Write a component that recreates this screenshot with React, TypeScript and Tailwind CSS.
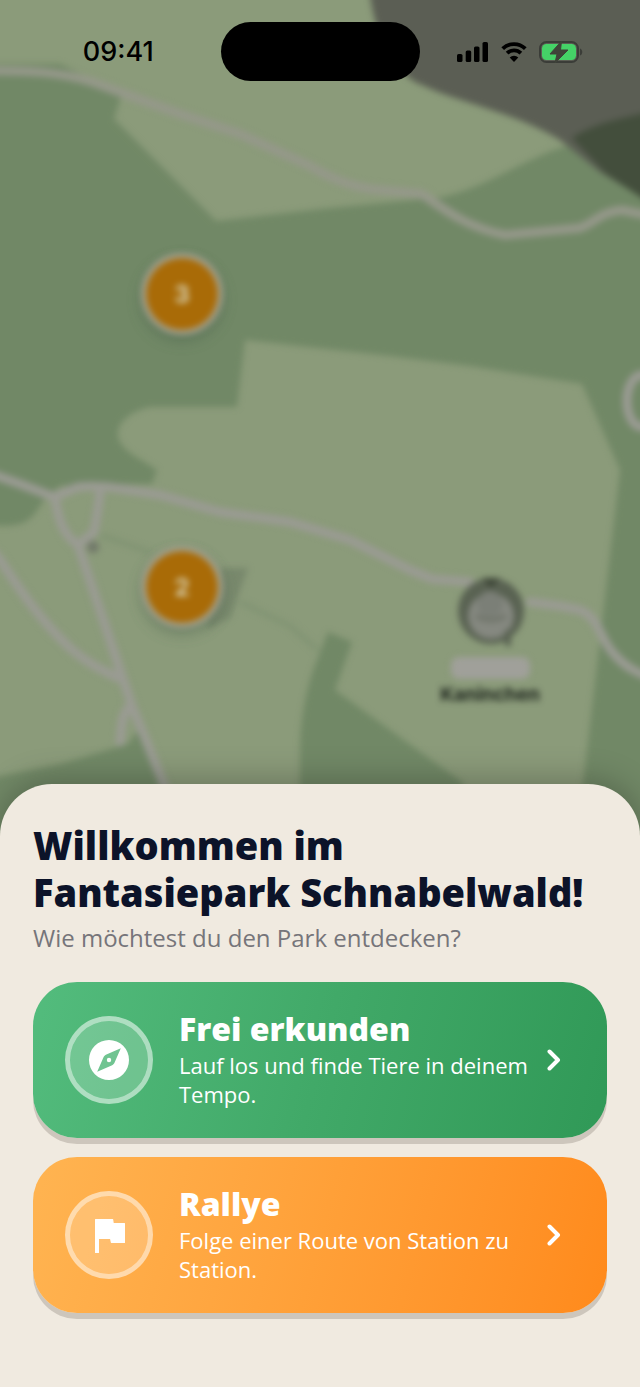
import React from 'react';

type Tour = {
  id: string;
  title: string;
  description: string;
  gradient: string;
  icon: React.ReactNode;
};

const CompassIcon = () => (
  <svg viewBox="0 0 24 24" className="size-12" fill="currentColor" aria-hidden="true">
    <path
      fillRule="evenodd"
      d="M12 2a10 10 0 1 0 0 20 10 10 0 0 0 0-20zM17.9 6.1l-3.1 7.2c-.3.7-.8 1.2-1.5 1.5L6.1 17.9l3.1-7.2c.3-.7.8-1.2 1.5-1.5z"
    />
    <circle cx="12" cy="12" r="1.1" />
  </svg>
);

const FlagIcon = () => (
  <svg
    viewBox="0 0 24 24"
    className="size-12"
    fill="currentColor"
    stroke="currentColor"
    strokeWidth="0.6"
    strokeLinejoin="round"
    aria-hidden="true"
  >
    <path d="M14.1 6.3 13.8 4.3H5.3v16.4h1.4v-7h6.1l.4 2h6.5V6.3z" />
  </svg>
);

const ChevronIcon = () => (
  <svg
    viewBox="0 0 14 22"
    className="h-[22px] w-[14px] shrink-0"
    fill="none"
    stroke="currentColor"
    strokeWidth="4"
    strokeLinecap="round"
    strokeLinejoin="round"
    aria-hidden="true"
  >
    <path d="M2.5 2.5 11 11l-8.5 8.5" />
  </svg>
);

const tours: Tour[] = [
  {
    id: 'free',
    title: 'Frei erkunden',
    description: 'Lauf los und finde Tiere in deinem Tempo.',
    gradient: 'from-[#53bc7d] via-[#41a968] to-[#309957]',
    icon: <CompassIcon />,
  },
  {
    id: 'rallye',
    title: 'Rallye',
    description: 'Folge einer Route von Station zu Station.',
    gradient: 'from-[#ffb451] via-[#ffa038] to-[#ff8a1b]',
    icon: <FlagIcon />,
  },
];

const ParkMap = () => (
  <svg
    viewBox="0 0 640 1387"
    preserveAspectRatio="xMidYMin slice"
    className="absolute inset-0 h-full w-full"
    aria-hidden="true"
  >
    <defs>
      <filter id="soft" x="-5%" y="-5%" width="110%" height="110%" colorInterpolationFilters="sRGB">
        <feGaussianBlur stdDeviation="3" />
      </filter>
      <filter id="pinShadow" x="-50%" y="-50%" width="200%" height="200%">
        <feGaussianBlur stdDeviation="8" />
      </filter>
    </defs>
    <rect width="640" height="1387" fill="#8b9b7a" />
    <g filter="url(#soft)">
      {/* Forest */}
      <g fill="#718866">
        <path d="M-20 64H60L85 76 121 96 114 119 216 221 330 208 435 198C480 192 520 160 566 146L660 190V860H574L620 470 582 384 470 366 390 356 245 340 237 407H150C128 412 116 424 118 437 122 452 140 458 157 470L152 484 100 484 60 486 44 500 36 512C26 526 12 528-20 524z" />
        <path d="M328 632 352 642 335 690 462 782 480 860H300V752C300 720 306 690 314 668z" />
        <path d="M-20 780 60 764 128 744 138 730 152 744 170 860H-20z" />
        <path d="M220 568h28l-18 50-24 12z" fill="#78886c" />
      </g>
      <path d="M100 535 150 552M240 602 290 626 318 650" fill="none" stroke="#7f9272" strokeWidth="4" />
      {/* Rock */}
      <path d="M368-20C372 20 384 62 415 82 460 104 510 110 560 140L600 172 660 208V-20z" fill="#5b5e54" />
      <path d="M572 138C592 124 620 118 660 110V210L606 174z" fill="#434e3c" />
      {/* Paths */}
      <g fill="none" stroke="#9a9b93" strokeWidth="9" strokeLinecap="round" strokeLinejoin="round">
        <path
          d="M-20 71C30 70 60 72 92 82L180 114 240 134 310 166C330 178 352 188 380 190L422 194C450 214 470 228 505 235L580 228C596 222 600 212 622 210L660 218"
          stroke="#95988a"
        />
        <path d="M-20 470 20 484 54 497 78 487C100 484 120 489 160 495L220 512 290 522 350 540 410 570 432 579 470 582" />
        <path d="M530 602 560 606 580 610C600 618 600 640 614 654 626 668 640 675 660 680" />
        <path d="M55 497C58 518 62 534 78 545L94 532C97 515 99 505 100 490" />
        <path d="M78 545 112 646 132 706 166 790 190 860" />
        <path d="M-20 536 0 560C20 590 40 620 70 648 88 664 102 670 118 678" />
        <path d="M130 706C120 716 122 728 120 742" />
        <ellipse cx="642" cy="401" rx="15" ry="26" />
      </g>
      <circle cx="93" cy="547" r="6" fill="#717869" />
      {/* Rabbit station */}
      <circle cx="491" cy="611" r="33" fill="#596252" />
      <circle cx="491" cy="616" r="23" fill="#858880" />
      <circle cx="490" cy="604" r="13" fill="#7b7f77" />
      <path d="m482 578 9 10 9-10z" fill="#3e4638" />
      <path d="M508 630v16M472 588l8 8M508 588l-6 8" stroke="#596252" strokeWidth="6" />
      <path d="M476 616q15 8 30 0" fill="none" stroke="#6d7267" strokeWidth="4" />
      <rect x="451" y="657" width="79" height="22" rx="8" fill="#a0a09a" />
      <text
        x="490"
        y="701"
        textAnchor="middle"
        className="fill-[#1c231c] font-['Inter',sans-serif] text-[19px] font-bold"
      >
        Kaninchen
      </text>
    </g>
    {/* Cluster pins */}
    {[
      { y: 294, count: '3' },
      { y: 587, count: '2' },
    ].map((pin) => (
      <g key={pin.y}>
        <circle cx="182" cy={pin.y + 6} r="40" fill="#3f5a45" opacity="0.45" filter="url(#pinShadow)" />
        <g filter="url(#soft)">
          <circle cx="182" cy={pin.y} r="41" fill="#a4a290" />
          <circle cx="182" cy={pin.y} r="36" fill="#a96b07" />
          <text
            x="182"
            y={pin.y + 9}
            textAnchor="middle"
            className="fill-[#d6cfae] font-['Inter',sans-serif] text-[24px] font-bold"
          >
            {pin.count}
          </text>
        </g>
      </g>
    ))}
  </svg>
);

const StatusBar = () => (
  <header className="relative grid grid-cols-[1fr_199px_1fr] items-center pt-[22px]">
    <time className="pl-4 text-center font-['Inter',sans-serif] text-[27px] leading-8 font-medium text-black">
      09:41
    </time>
    <div className="h-[59px] rounded-full bg-black" />
    <div className="flex items-center justify-center gap-3 pr-5">
      <svg viewBox="0 0 32 20" className="h-5 w-8" aria-label="Mobilfunk">
        <rect x="0" y="12" width="5.5" height="8" rx="1.6" />
        <rect x="8.7" y="8.5" width="5.5" height="11.5" rx="1.6" />
        <rect x="17" y="4.5" width="5.5" height="15.5" rx="1.6" />
        <rect x="25.5" y="0" width="5.5" height="20" rx="1.6" />
      </svg>
      <svg viewBox="0 0 26 20" className="h-5 w-[26px]" aria-label="WLAN">
        <path
          d="M1.7 6.7a16 16 0 0 1 22.6 0M6.1 11.2a9.8 9.8 0 0 1 13.8 0"
          fill="none"
          stroke="#000"
          strokeWidth="3.8"
        />
        <path d="M13 20 8.7 15.6a6.2 6.2 0 0 1 8.6 0z" />
      </svg>
      <svg viewBox="0 0 44 22" className="h-[22px] w-11" aria-label="Akku lädt">
        <rect x="1" y="1" width="38" height="20" rx="6.5" fill="none" stroke="#3b3d38" strokeWidth="2" />
        <rect x="3" y="3" width="34" height="16" rx="4.5" fill="#45d267" />
        <path d="M41 7.5c3 1 3 6 0 7z" fill="#3b3d38" />
        <path
          d="M22.5 0 11 13h7L16 22 29 9h-7.5z"
          fill="#3f4339"
          stroke="#3f4339"
          strokeWidth="1"
          strokeLinejoin="round"
        />
      </svg>
    </div>
  </header>
);

const TourButton: React.FC<{ tour: Tour }> = ({ tour }) => (
  <button
    type="button"
    className={`flex w-full cursor-pointer items-center rounded-[44px] bg-linear-105 py-[29px] pr-[46px] pl-8 text-left text-white shadow-[0_6px_0_#cdc6bc] ${tour.gradient}`}
  >
    <span className="flex size-[88px] shrink-0 items-center justify-center rounded-full border-5 border-white/55 bg-white/20 bg-clip-padding">
      {tour.icon}
    </span>
    <span className="ml-[26px] flex-1">
      <span className="block text-[32px] leading-9 font-extrabold">{tour.title}</span>
      <span className="mt-1 block text-[22px] leading-[29px] font-medium text-white">{tour.description}</span>
    </span>
    <ChevronIcon />
  </button>
);

const App: React.FC = () => {
  return (
    <div className="relative flex min-h-screen flex-col overflow-hidden bg-[#8b9b7a] font-['Open_Sans',sans-serif]">
      <ParkMap />
      <StatusBar />

      {/* Welcome sheet */}
      <main className="relative mt-auto rounded-t-[52px] bg-[#f0eae0] px-[33px] pt-[38px] pb-[74px] shadow-[0_-4px_32px_rgba(0,0,0,0.25)]">
        <h1 className="text-[38px] leading-[47px] font-extrabold text-[#0c1329]">
          <span className="block">Willkommen im</span>
          <span className="block">Fantasiepark Schnabelwald!</span>
        </h1>
        <p className="mt-1 text-[24px] leading-[35px] font-medium text-[#76757a]">Wie möchtest du den Park entdecken?</p>

        <div className="mt-[27px] flex flex-col gap-[19px]">
          {tours.map((tour) => (
            <TourButton key={tour.id} tour={tour} />
          ))}
        </div>
      </main>
    </div>
  );
};

export default App;
